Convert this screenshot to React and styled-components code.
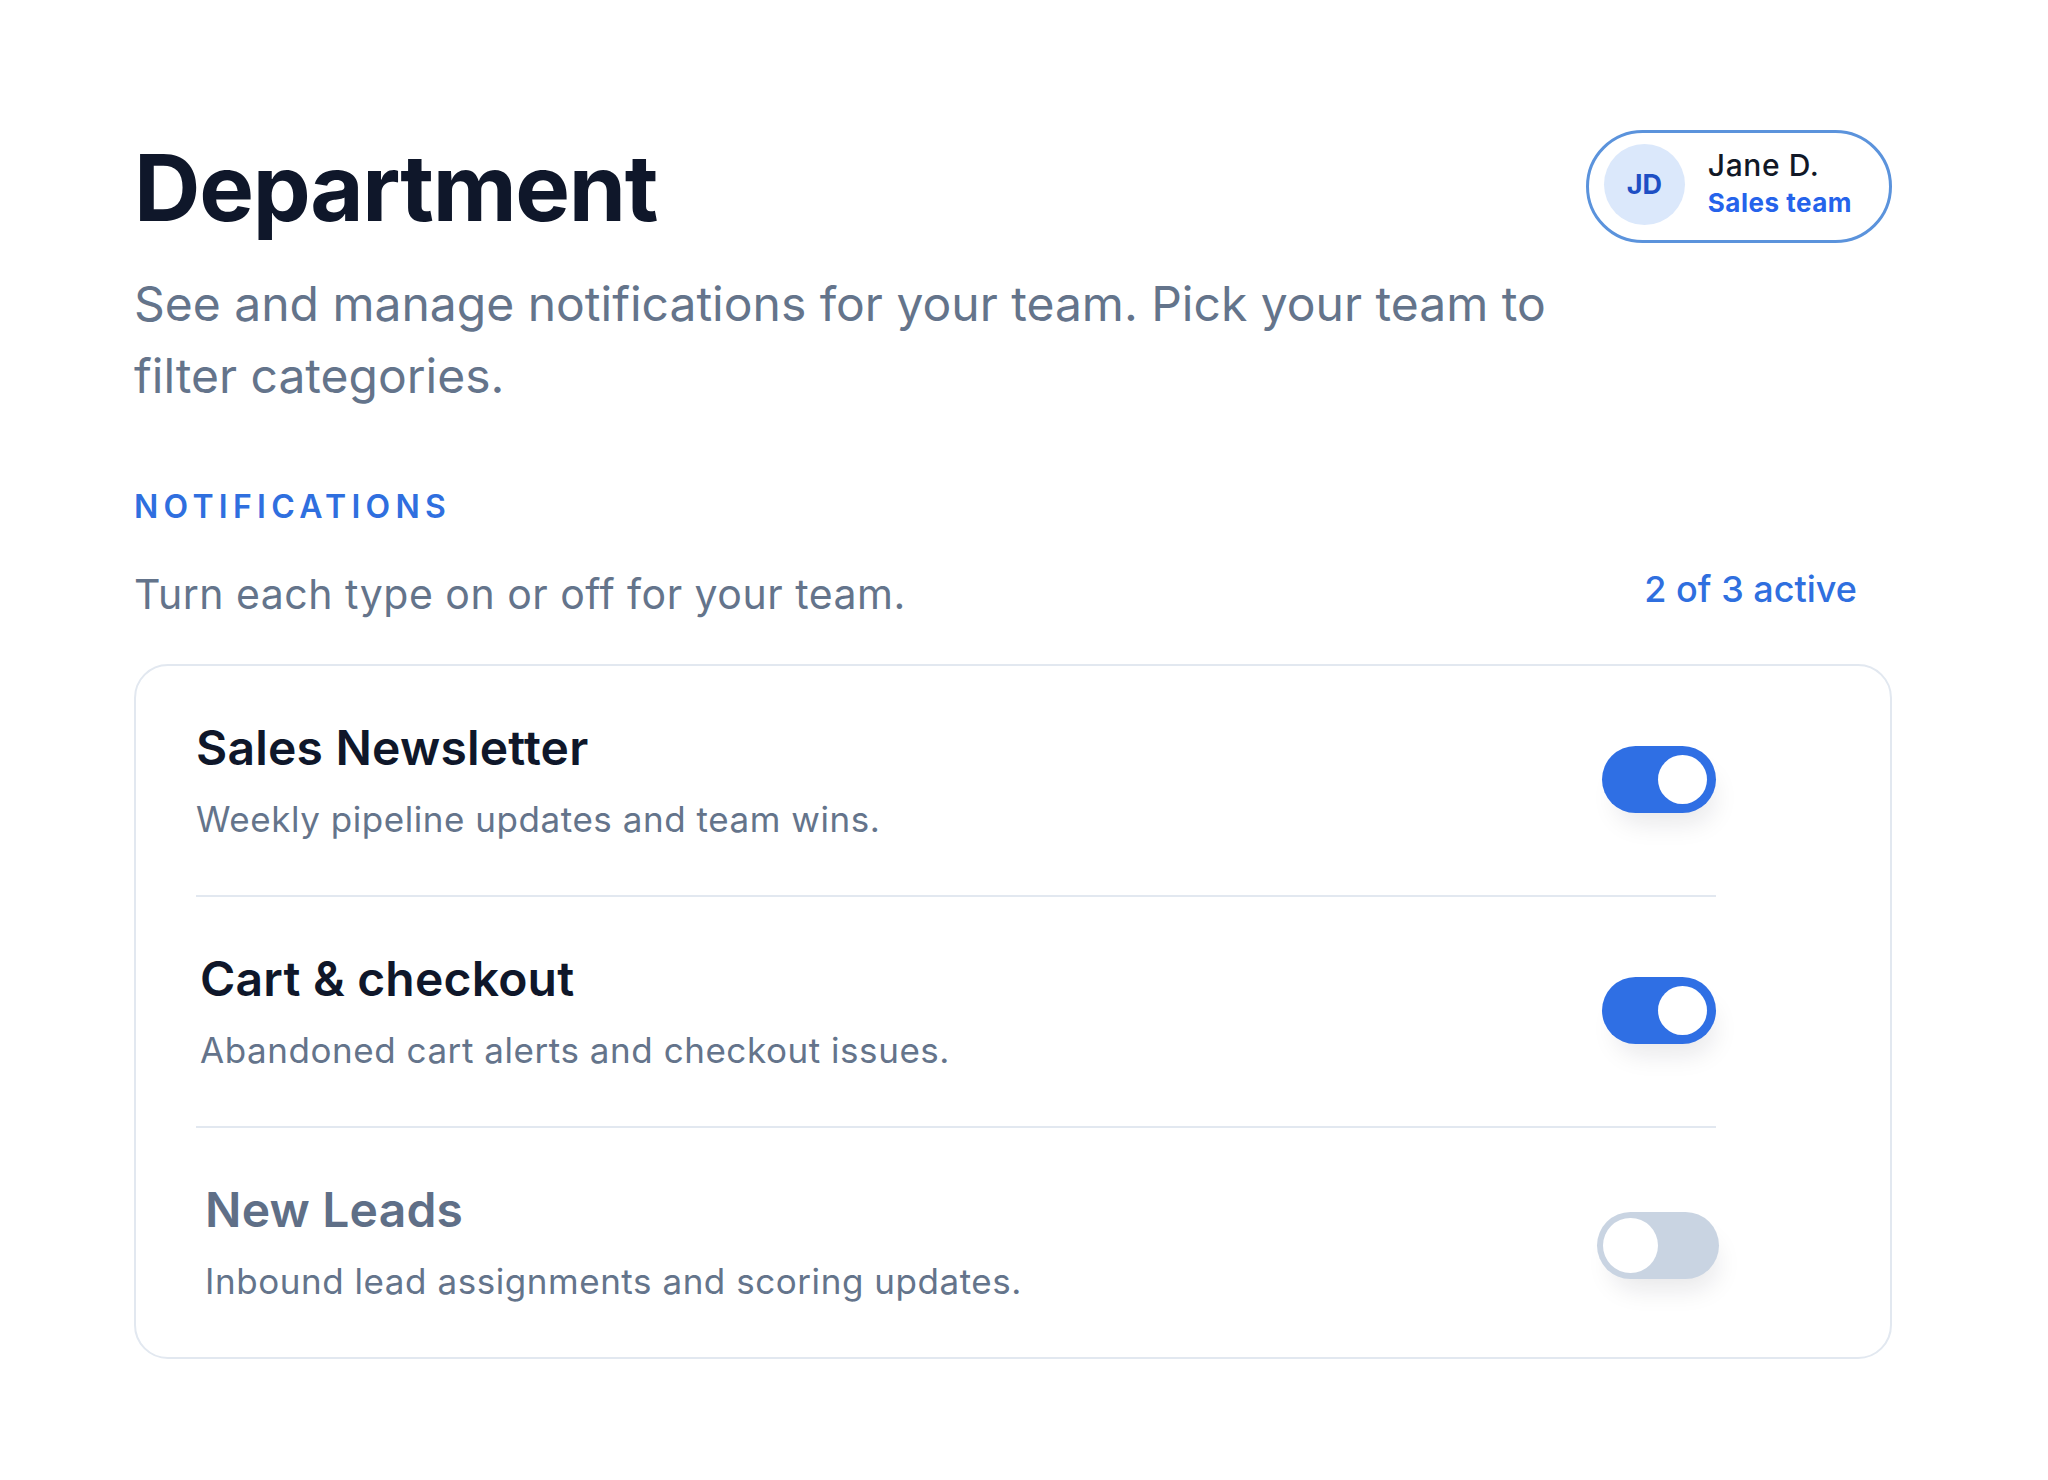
import React from 'react'
import styled, { createGlobalStyle } from 'styled-components'

const GlobalStyle = createGlobalStyle`
  body {
    margin: 0;
    background: #ffffff;
    font-family: Inter, "Noto Sans", "Liberation Sans", sans-serif;
    -webkit-font-smoothing: antialiased;
  }
`

const notifications = [
    { id: 'news', title: 'Sales Newsletter', text: 'Weekly pipeline updates and team wins.', on: true, indent: 0 },
    { id: 'cart', title: 'Cart & checkout', text: 'Abandoned cart alerts and checkout issues.', on: true, indent: 4 },
    { id: 'leads', title: 'New Leads', text: 'Inbound lead assignments and scoring updates.', on: false, indent: 9 },
]

function Toggle({ on }) {
    return (
        <Track role="switch" aria-checked={on} $on={on}>
            <Knob $on={on} />
        </Track>
    )
}

export default function App() {
    const active = notifications.filter(n => n.on).length

    return (
        <Page>
            <GlobalStyle />
            <Header>
                <Title>Department</Title>
                <UserPill>
                    <Avatar>JD</Avatar>
                    <UserText>
                        <UserName>Jane D.</UserName>
                        <UserTeam>Sales team</UserTeam>
                    </UserText>
                </UserPill>
            </Header>
            <Subtitle>See and manage notifications for your team. Pick your team to filter categories.</Subtitle>

            <SectionLabel>Notifications</SectionLabel>
            <SectionRow>
                <Hint>Turn each type on or off for your team.</Hint>
                <Counter>{active} of {notifications.length} active</Counter>
            </SectionRow>

            <Card>
                {notifications.map(n => (
                    <Row key={n.id} $indent={n.indent}>
                        <RowText>
                            <RowTitle $muted={!n.on}>{n.title}</RowTitle>
                            <RowDesc>{n.text}</RowDesc>
                        </RowText>
                        <Toggle on={n.on} />
                    </Row>
                ))}
            </Card>
        </Page>
    )
}

const Page = styled.main`
padding: 133px 156px 80px 134px;
`

const Header = styled.header`
display: flex;
align-items: center;
justify-content: space-between;
`

const Title = styled.h1`
margin: 0;
font-size: 92px;
line-height: 1.2;
font-weight: 700;
color: #0f172a;
letter-spacing: -1.3px;
`

const UserPill = styled.div`
display: flex;
align-items: center;
gap: 23px;
margin-top: -4px;
padding: 0 37px 4px 15px;
box-sizing: border-box;
height: 113px;
border: 3px solid #5b93dc;
border-radius: 999px;
background: #fff;
`

const Avatar = styled.div`
width: 81px;
height: 81px;
border-radius: 50%;
background: #dbe8fb;
color: #1e4fc4;
display: flex;
align-items: center;
justify-content: center;
font-size: 27px;
font-weight: 700;
`

const UserText = styled.div`
display: flex;
flex-direction: column;
gap: 4px;
margin-bottom: 3px;
`

const UserName = styled.span`
font-size: 30px;
line-height: 1.2;
font-weight: 550;
letter-spacing: 0.6px;
color: #111827;
`

const UserTeam = styled.span`
font-size: 26px;
line-height: 1.2;
font-weight: 700;
letter-spacing: 0.5px;
color: #2563eb;
`

const Subtitle = styled.p`
margin: 25px 0 0;
max-width: 1460px;
font-size: 48px;
line-height: 72px;
color: #64748b;
`

const SectionLabel = styled.h2`
margin: 76px 0 0;
font-size: 32px;
line-height: 1.2;
font-weight: 600;
letter-spacing: 0.165em;
text-transform: uppercase;
color: #2f6fdf;
`

const SectionRow = styled.div`
display: flex;
align-items: flex-start;
justify-content: space-between;
margin-top: 37px;
`

const Hint = styled.p`
margin: 0;
font-size: 41px;
line-height: 60px;
letter-spacing: 0.5px;
color: #64748b;
`

const Counter = styled.span`
margin-right: 35px;
font-size: 36px;
line-height: 50px;
font-weight: 500;
color: #2f6fdf;
`

const Card = styled.section`
margin-top: 40px;
padding: 0 174px 0 60px;
border: 2px solid #e2e8f0;
border-radius: 34px;
background: #fff;
`

const Row = styled.div`
display: flex;
align-items: center;
justify-content: space-between;
padding: 54px 0 50px ${p => p.$indent}px;
border-bottom: 2px solid #e2e8f0;

&:last-child {
    border-bottom: none;
}
`

const RowText = styled.div`
display: flex;
flex-direction: column;
gap: 18px;
`

const RowTitle = styled.h3`
margin: 0;
font-size: 48px;
line-height: 56px;
font-weight: 600;
letter-spacing: 0.2px;
color: ${p => p.$muted ? '#5f6f87' : '#0f172a'};
`

const RowDesc = styled.p`
margin: 0;
font-size: 35px;
line-height: 51px;
letter-spacing: 0.55px;
color: #64748b;
`

const Track = styled.div`
flex-shrink: 0;
display: flex;
align-items: center;
justify-content: ${p => p.$on ? 'flex-end' : 'flex-start'};
box-sizing: border-box;
width: ${p => p.$on ? '114px' : '122px'};
height: 67px;
padding: ${p => p.$on ? '0 9px' : '0 6px'};
margin: ${p => p.$on ? '-6px 0 0' : '2px -3px 0 0'};
border-radius: 999px;
background: ${p => p.$on ? '#2f6fe4' : '#c9d4e2'};
box-shadow: 6px 18px 26px -8px rgba(15, 23, 42, 0.10);
`

const Knob = styled.span`
width: ${p => p.$on ? '49px' : '55px'};
height: ${p => p.$on ? '49px' : '55px'};
border-radius: 50%;
background: #fff;
`
